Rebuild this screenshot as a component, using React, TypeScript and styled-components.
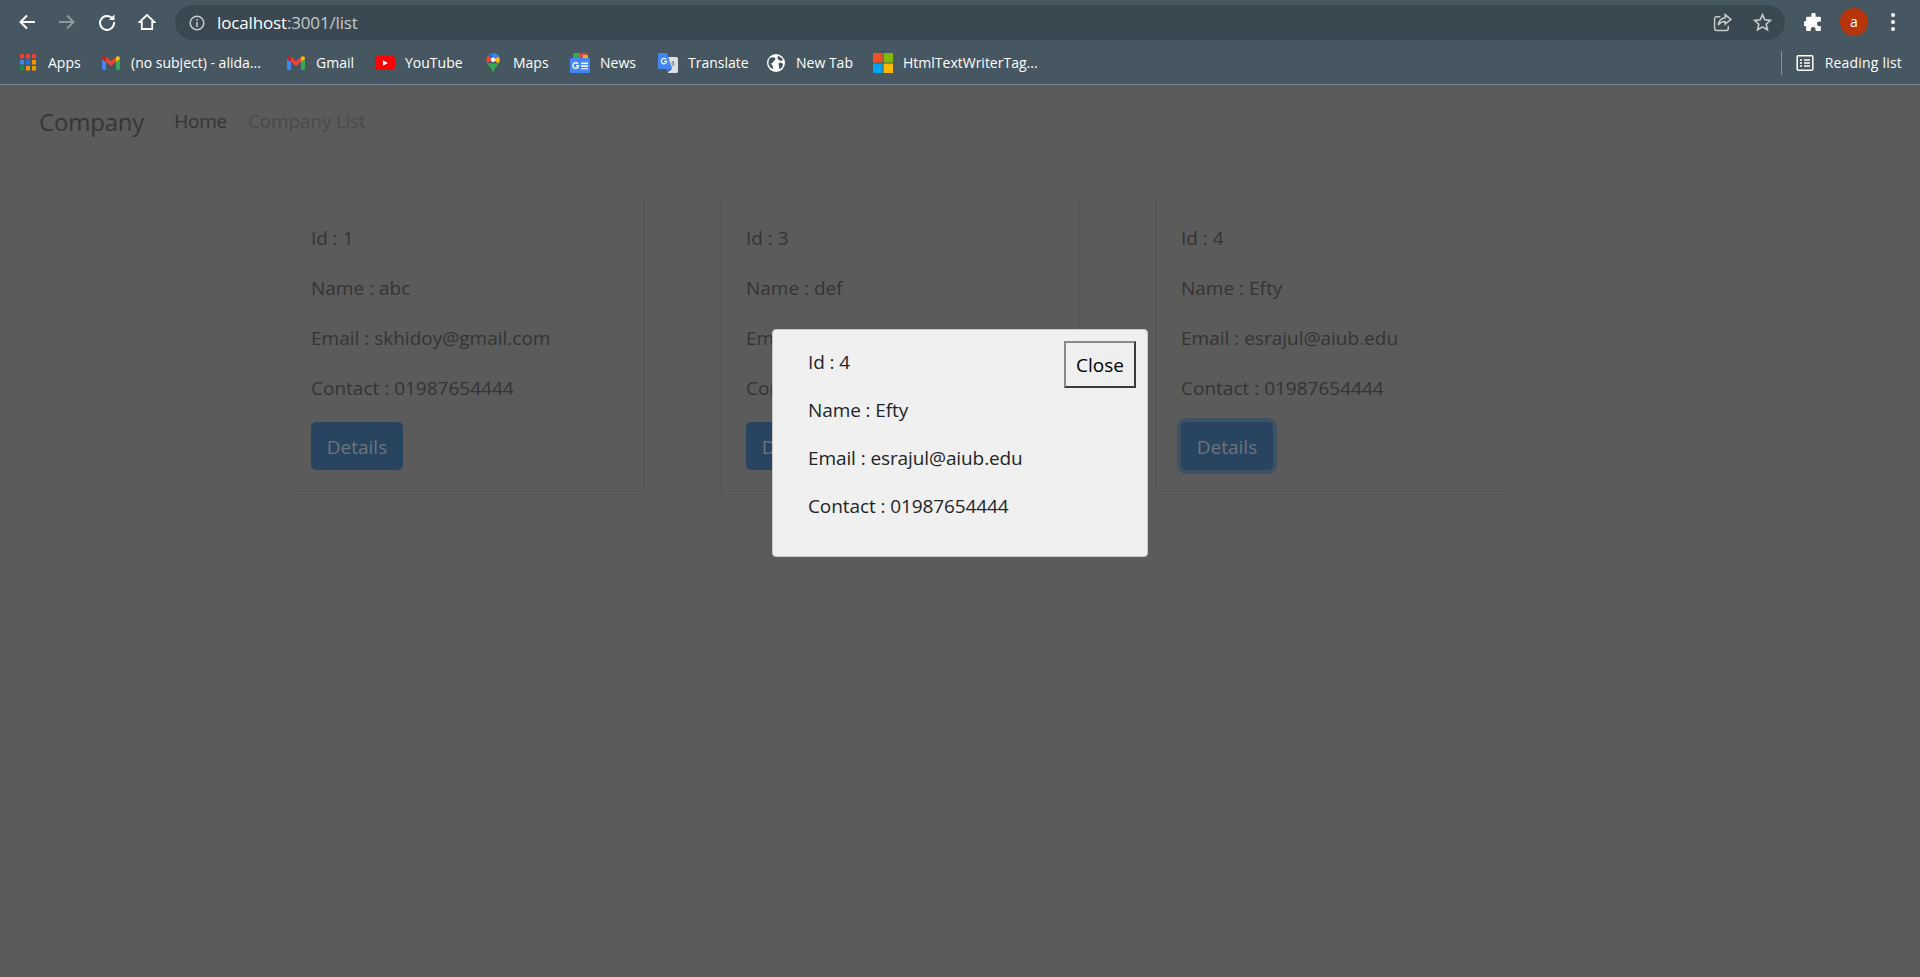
import React from 'react';
import styled, { createGlobalStyle } from 'styled-components';

const UI_FONT = `"Open Sans", "Noto Sans", "Liberation Sans", sans-serif`;

const GlobalStyle = createGlobalStyle`
  html, body {
    margin: 0;
    padding: 0;
    height: 100%;
    overflow: hidden;
    background: #5b5b5b;
    font-family: ${UI_FONT};
  }
  * {
    box-sizing: border-box;
  }
`;

type Company = { id: number; name: string; email: string; contact: string };

const companies: Company[] = [
  { id: 1, name: 'abc', email: 'skhidoy@gmail.com', contact: '01987654444' },
  { id: 3, name: 'def', email: 'esrajul@aiub.edu', contact: '01987654444' },
  { id: 4, name: 'Efty', email: 'esrajul@aiub.edu', contact: '01987654444' },
];

function Gmail() {
  return (
    <svg width="18" height="14" viewBox="0 0 18 14">
      <path d="M0 3v9.500A1.500 1.500 0 0 0 1.500 14H4V6z" fill="#4285f4" />
      <path d="M14 6v8h2.500a1.500 1.500 0 0 0 1.500-1.500V3z" fill="#34a853" />
      <path d="M4 6V1L9 5l5-4v5L9 10z" fill="#ea4335" />
      <path d="M0 3V2.200C0 .5 2 -.4 3.200.6L4 1.200V6z" fill="#c5221f" />
      <path d="M14 6V1.200l.8-.6C16 -.4 18 .5 18 2.200V3z" fill="#fbbc04" />
    </svg>
  );
}

function AppsGrid() {
  const cols = ['#ea4335', '#ea4335', '#ea4335', '#4285f4', '#1a73e8', '#f29900', '#1e8e3e', '#f29900', '#f29900'];
  return (
    <svg width="16" height="17" viewBox="0 0 16 17">
      {cols.map((c, i) => (
        <rect key={i} x={(i % 3) * 6} y={Math.floor(i / 3) * 6} width="4" height="4.500" fill={c} />
      ))}
    </svg>
  );
}

function YouTube() {
  return (
    <svg width="20" height="14" viewBox="0 0 20 14">
      <rect width="20" height="14" rx="3.500" fill="#f00" />
      <path d="M8 4.200l5 2.800-5 2.800z" fill="#fff" />
    </svg>
  );
}

function Maps() {
  return (
    <svg width="14" height="20" viewBox="0 0 12 18">
      <path d="M6 0a6 6 0 0 1 5.400 3.400L6 6z" fill="#4285f4" />
      <path d="M1.600 2A6 6 0 0 1 6 0v6z" fill="#1a73e8" />
      <path d="M1.600 2L6 6 .8 9A6 6 0 0 1 1.600 2z" fill="#ea4335" />
      <path d="M11.400 3.400A6 6 0 0 1 11 9.500L6 6z" fill="#fbbc04" />
      <path d="M.8 9l10.200.5C9.500 12 7 14 6 18 5 14 2 12 .8 9z" fill="#34a853" />
      <circle cx="6" cy="6" r="2" fill="#fff" />
    </svg>
  );
}

function GoogleNews() {
  return (
    <svg width="20" height="20" viewBox="0 0 20 20">
      <rect x="3" y="0" width="14" height="8" rx="1" fill="#34a853" />
      <rect x="9" y="0" width="8" height="8" rx="1" fill="#ea4335" />
      <rect x="13" y="2" width="5" height="6" fill="#fbbc04" />
      <rect x="0" y="5" width="20" height="15" rx="1.500" fill="#4285f4" />
      <rect x="11" y="9.500" width="7" height="1.600" fill="#fff" />
      <rect x="11" y="12.300" width="7" height="1.600" fill="#fff" />
      <rect x="11" y="15" width="7" height="1.400" fill="#c6dafc" />
      <path d="M8 10.800a2.900 2.900 0 1 0 .6 2H6" fill="none" stroke="#fff" strokeWidth="1.400" />
    </svg>
  );
}

function GoogleTranslate() {
  return (
    <svg width="20" height="20" viewBox="0 0 20 20">
      <path d="M8 4h10.500a1.500 1.500 0 0 1 1.500 1.500v13a1.500 1.500 0 0 1-1.500 1.500H10z" fill="#dcdfe3" />
      <path d="M15 8l1 3h-2.500zM13 15l1.500-3h2" fill="none" stroke="#8a9096" strokeWidth="1" />
      <path d="M1.500 0H9l5 16H1.500A1.500 1.500 0 0 1 0 14.500v-13A1.500 1.500 0 0 1 1.500 0z" fill="#4285f4" />
      <path d="M10 16l-1 4 5-4z" fill="#3367d6" />
      <path d="M8 6.300A2.700 2.700 0 1 0 8.700 8.300H6.200" fill="none" stroke="#fff" strokeWidth="1.200" />
    </svg>
  );
}

function Globe() {
  return (
    <svg width="18" height="18" viewBox="0 0 18 18">
      <circle cx="9" cy="9" r="9" fill="#fff" />
      <path d="M3 4c2-1 4-1 5 0s0 2-1 3-1 2-2 2-1 1 0 2 1 2 1 4C3 14 1 11 1.500 8 1.800 6 2 5 3 4zM11 2c2 .5 4 2 5 4l-2 1c-1 0-1-1-2-1s-2-2-1-4zM12 9c2-.5 3 0 4 1 0 2-1 4-3 5-1 0-1-2-1-3s-1-2 0-3z" fill="#46565f" />
    </svg>
  );
}

function Microsoft() {
  return (
    <svg width="20" height="20" viewBox="0 0 20 20">
      <rect width="9.500" height="9.500" fill="#f25022" />
      <rect x="10.500" width="9.500" height="9.500" fill="#7fba00" />
      <rect y="10.500" width="9.500" height="9.500" fill="#00a4ef" />
      <rect x="10.500" y="10.500" width="9.500" height="9.500" fill="#ffb900" />
    </svg>
  );
}

const bookmarks: { label: string; icon: React.ReactNode; width: number }[] = [
  { label: 'Apps', icon: <AppsGrid />, width: 33 },
  { label: '(no subject) - alida...', icon: <Gmail />, width: 135 },
  { label: 'Gmail', icon: <Gmail />, width: 39 },
  { label: 'YouTube', icon: <YouTube />, width: 58 },
  { label: 'Maps', icon: <Maps />, width: 37 },
  { label: 'News', icon: <GoogleNews />, width: 38 },
  { label: 'Translate', icon: <GoogleTranslate />, width: 58 },
  { label: 'New Tab', icon: <Globe />, width: 57 },
  { label: 'HtmlTextWriterTag...', icon: <Microsoft />, width: 134 },
];

export default function App() {
  const selected = companies[2];
  return (
    <>
      <GlobalStyle />
      <Page>
        <Chrome>
          <Toolbar>
            <NavIcon>
              <svg width="18" height="18" viewBox="0 0 18 18" fill="none" stroke="#fff" strokeWidth="2">
                <path d="M17 9H3M9 2.500L2.500 9 9 15.500" />
              </svg>
            </NavIcon>
            <NavIcon>
              <svg width="18" height="18" viewBox="0 0 18 18" fill="none" stroke="#8e999f" strokeWidth="2">
                <path d="M1 9h14M9 2.500L15.500 9 9 15.500" />
              </svg>
            </NavIcon>
            <NavIcon>
              <svg width="18" height="18" viewBox="0 0 18 18" fill="none" stroke="#fff" strokeWidth="2">
                <path d="M14.500 5.500A7 7 0 1 0 16 9" />
                <path d="M16.500 1.500V7H11z" fill="#fff" stroke="none" />
              </svg>
            </NavIcon>
            <NavIcon>
              <svg width="18" height="18" viewBox="0 0 18 18" fill="none" stroke="#fff" strokeWidth="1.800">
                <path d="M9 2L1.500 9H3.800V16H14.200V9H16.500z" strokeLinejoin="miter" />
              </svg>
            </NavIcon>
            <Omnibox>
              <InfoIcon>
                <svg width="16" height="16" viewBox="0 0 16 16" fill="none" stroke="#c5cbcf" strokeWidth="1.500">
                  <circle cx="8" cy="8" r="6.800" />
                  <path d="M8 7v5M8 4v1.800" />
                </svg>
              </InfoIcon>
              <Url>
                localhost<UrlPath>:3001/list</UrlPath>
              </Url>
              <OmniActions>
                <svg width="19" height="19" viewBox="0 0 18 18" fill="none" stroke="#c5cbcf" strokeWidth="1.400">
                  <path d="M7 3.500H3.500A2 2 0 0 0 1.500 5.500v9a2 2 0 0 0 2 2h9a2 2 0 0 0 2-2V12" />
                  <path d="M11.500 1.500L17 6l-5.500 4.500V8C8.500 8 6.500 9 5 11.500 5.500 7.500 8 5 11.500 4.500z" />
                </svg>
                <svg width="19" height="19" viewBox="0 0 18 18" fill="none" stroke="#c5cbcf" strokeWidth="1.500">
                  <path d="M9 1.500l2.200 5 5.300.5-4 3.600 1.200 5.300L9 13.100l-4.700 2.800 1.200-5.300-4-3.600 5.300-.5z" />
                </svg>
              </OmniActions>
            </Omnibox>
            <RightTools>
              <svg width="19" height="19" viewBox="0 0 18 18" fill="#fff">
                <path d="M7 1.500a2 2 0 0 1 4 0V3.500h4a1 1 0 0 1 1 1V8h-1.500a2.300 2.300 0 0 0 0 4.600H16v3.400a1 1 0 0 1-1 1H11v-1.500a2.300 2.300 0 0 0-4.600 0V17H3a1 1 0 0 1-1-1v-3.500H.8a2.300 2.300 0 0 1 0-4.600H2V4.500a1 1 0 0 1 1-1h4z" />
              </svg>
              <Avatar>a</Avatar>
              <Kebab>
                <i />
                <i />
                <i />
              </Kebab>
            </RightTools>
          </Toolbar>
          <BookmarkBar>
            {bookmarks.map((b) => (
              <Bookmark key={b.label}>
                <BookmarkIcon>{b.icon}</BookmarkIcon>
                <BookmarkLabel $width={b.width}>{b.label}</BookmarkLabel>
              </Bookmark>
            ))}
            <ReadingList>
              <svg width="18" height="18" viewBox="0 0 18 18" fill="none" stroke="#fff" strokeWidth="1.500">
                <rect x="1.200" y="1.700" width="15.600" height="14.600" rx="1" />
                <path d="M4 6h2M8 6h6M4 9h2M8 9h6M4 12h2M8 12h6" />
              </svg>
              Reading list
            </ReadingList>
          </BookmarkBar>
        </Chrome>
        <Viewport>
          <Navbar>
            <Brand>Company</Brand>
            <NavLink>Home</NavLink>
            <NavLink $muted>Company List</NavLink>
          </Navbar>
          <CardRow>
            {companies.map((c) => (
              <Card key={c.id}>
                <Line>Id : {c.id}</Line>
                <Line>Name : {c.name}</Line>
                <Line>Email : {c.email}</Line>
                <Line>Contact : {c.contact}</Line>
                <DetailsButton $focused={c.id === selected.id}>Details</DetailsButton>
              </Card>
            ))}
          </CardRow>
          <Modal>
            <ModalBody>
              <ModalLine>Id : {selected.id}</ModalLine>
              <ModalLine>Name : {selected.name}</ModalLine>
              <ModalLine>Email : {selected.email}</ModalLine>
              <ModalLine>Contact : {selected.contact}</ModalLine>
            </ModalBody>
            <CloseButton>Close</CloseButton>
          </Modal>
        </Viewport>
      </Page>
    </>
  );
}

const Page = styled.div`
  width: 100%;
  height: 100vh;
  display: flex;
  flex-direction: column;
`;

const Chrome = styled.header`
  background: #465761;
  border-bottom: 1px solid #6f8290;
  flex: none;
`;

const Toolbar = styled.div`
  height: 44px;
  display: flex;
  align-items: center;
  padding: 0 0 0 18px;
`;

const NavIcon = styled.span`
  width: 18px;
  height: 18px;
  margin-right: 22px;
  display: flex;
`;

const Omnibox = styled.div`
  width: 1610px;
  height: 35px;
  margin-left: -3px;
  margin-top: 1px;
  border-radius: 18px;
  background: #3a4851;
  display: flex;
  align-items: center;
  padding: 0 13px 0 14px;
`;

const InfoIcon = styled.span`
  width: 16px;
  height: 16px;
  margin-right: 12px;
  display: flex;
`;

const Url = styled.span`
  color: #fff;
  font-size: 17px;
  letter-spacing: -0.15px;
`;

const UrlPath = styled.span`
  color: #c3c9cd;
`;

const OmniActions = styled.div`
  margin-left: auto;
  display: flex;
  gap: 21px;
`;

const RightTools = styled.div`
  display: flex;
  align-items: center;
  margin-left: 19px;
  gap: 17px;
`;

const Avatar = styled.span`
  width: 28px;
  height: 28px;
  border-radius: 50%;
  background: #b7350b;
  color: #fff;
  font-size: 14px;
  display: flex;
  align-items: center;
  justify-content: center;
  padding-bottom: 2px;
`;

const Kebab = styled.span`
  display: flex;
  flex-direction: column;
  gap: 3px;
  margin-left: 6px;
  i {
    display: block;
    width: 4px;
    height: 4px;
    border-radius: 50%;
    background: #fff;
  }
`;

const BookmarkBar = styled.nav`
  height: 40px;
  display: flex;
  align-items: center;
  gap: 20px;
  padding: 0 18px 3px 18px;
`;

const Bookmark = styled.span`
  display: flex;
  align-items: center;
  gap: 10px;
  color: #fff;
  font-size: 14px;
  white-space: nowrap;
`;

const BookmarkIcon = styled.span`
  width: 20px;
  height: 20px;
  display: flex;
  align-items: center;
  justify-content: center;
  flex: none;
`;

const BookmarkLabel = styled.span<{ $width: number }>`
  width: ${(p) => p.$width}px;
`;

const ReadingList = styled.span`
  margin-left: auto;
  height: 24px;
  display: flex;
  align-items: center;
  gap: 11px;
  padding-left: 14px;
  border-left: 1px solid #83929b;
  color: #fff;
  font-size: 14px;
  letter-spacing: 0.2px;
`;

const Viewport = styled.main`
  position: relative;
  flex: 1;
  background: #5b5b5b;
  overflow: hidden;
`;

const Navbar = styled.div`
  height: 72px;
  display: flex;
  align-items: center;
  padding: 0 0 0 39px;
`;

const Brand = styled.span`
  color: #363636;
  font-size: 24px;
  letter-spacing: -0.2px;
  margin-right: 30px;
`;

const NavLink = styled.span<{ $muted?: boolean }>`
  color: ${(p) => (p.$muted ? '#4a4a4a' : '#333333')};
  font-size: 19px;
  letter-spacing: -0.2px;
  margin-right: 21px;
`;

const CardRow = styled.div`
  display: flex;
  gap: 75px;
  padding: 39px 0 0 285px;
`;

const Card = styled.article`
  width: 360px;
  height: 299px;
  border: 1px solid #555555;
  border-radius: 5px;
  padding: 29px 25px 0;
  display: flex;
  flex-direction: column;
  align-items: flex-start;
`;

const Line = styled.p`
  margin: 0 0 26px;
  height: 24px;
  line-height: 24px;
  color: #343434;
  font-size: 19px;
`;

const DetailsButton = styled.button<{ $focused?: boolean }>`
  margin-top: -4px;
  width: 92px;
  height: 48px;
  border: none;
  border-radius: 5px;
  background: #284461;
  color: #6c747c;
  font-family: inherit;
  font-size: 19px;
  padding: 1px 0 0;
  box-shadow: ${(p) => (p.$focused ? '0 0 0 4px #3f5164' : 'none')};
`;

const Modal = styled.section`
  position: absolute;
  left: 772px;
  top: 244px;
  width: 376px;
  height: 228px;
  background: #f0f0f0;
  border: 1px solid #c9c9c9;
  border-radius: 4px;
  display: flex;
  justify-content: space-between;
  align-items: flex-start;
  padding: 11px 11px 0 35px;
`;

const ModalBody = styled.div`
  padding-top: 9px;
`;

const ModalLine = styled.p`
  margin: 0 0 24px;
  height: 24px;
  line-height: 24px;
  color: #212529;
  font-size: 19px;
  letter-spacing: -0.1px;
`;

const CloseButton = styled.button`
  width: 72px;
  height: 47px;
  background: #efefef;
  border: 2px solid;
  border-color: #8a8a8a #3c3c3c #3c3c3c #8a8a8a;
  color: #000;
  font-family: inherit;
  font-size: 19px;
  padding: 0;
`;
